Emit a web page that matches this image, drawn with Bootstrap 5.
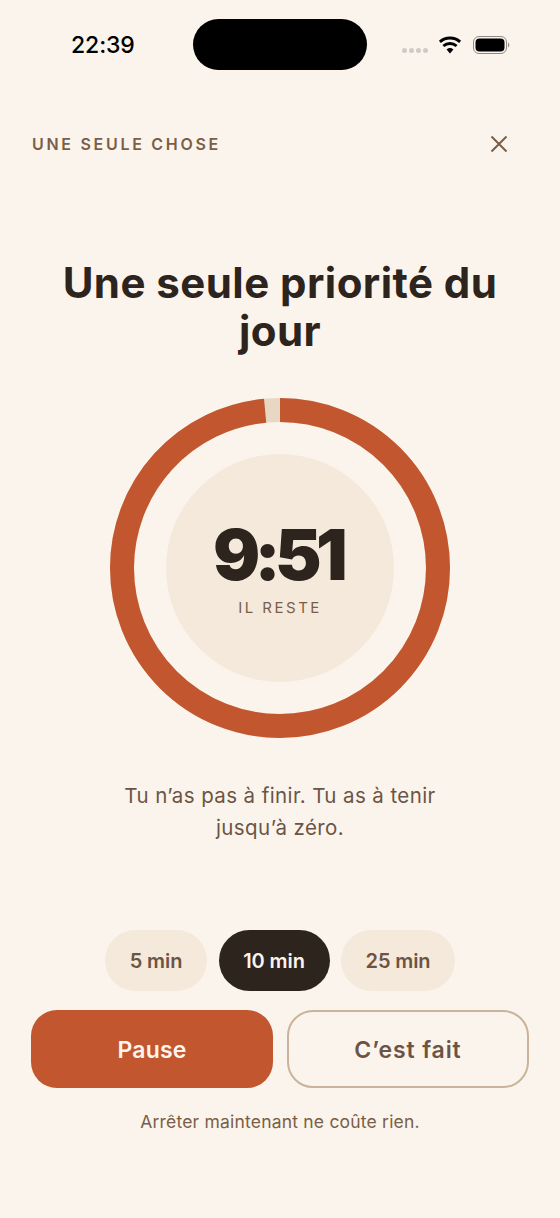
<!DOCTYPE html>
<html lang="fr">
<head>
<meta charset="utf-8">
<title>Une seule chose</title>
<link href="https://cdn.jsdelivr.net/npm/bootstrap@5.3.0/dist/css/bootstrap.min.css" rel="stylesheet">
<style>
html,body{height:100%}
body{background:#fbf4ec;color:#2e241e;font-family:Inter,"Liberation Sans",sans-serif;margin:0}
.screen{width:560px;height:1218px;overflow:hidden}
.statusbar{height:51px;margin-top:19px;padding:0 49px 0 71px}
.clock{font-size:23px;font-weight:500;color:#000;width:122px;letter-spacing:-.1px;line-height:51px;padding-top:2px}
.island{width:174px;height:51px;background:#000;border-radius:26px}
.sysicons{margin-left:35px}
.dots{gap:2px;margin-top:11px;margin-right:10px}
.dots i{width:5px;height:5px;border-radius:50%;background:#cfcac5;display:block}
.wifi{margin-right:11px}
.topbar{padding:0 52px 0 32px;margin-top:64px;height:20px}
.eyebrow{font-size:16px;font-weight:600;letter-spacing:2.7px;color:#7a5e47;line-height:20px;white-space:nowrap}
.headline{font-size:42px;font-weight:700;line-height:48px;letter-spacing:.45px;text-align:center;margin:105px 40px 0;color:#2e241e}
.dial{width:340px;height:340px;margin:43px auto 0;position:relative}
.dial svg{position:absolute;inset:0}
.core{width:228px;height:228px;border-radius:50%;background:#f5e9db;position:relative}
.count{font-size:70px;font-weight:900;letter-spacing:-5.6px;line-height:70px;color:#2e241e;margin:2px 5px 0 0}
.remain{font-size:15px;letter-spacing:2.5px;color:#7a5e47;line-height:20px;margin-top:8px}
.quote{font-size:20.5px;line-height:32px;letter-spacing:.4px;color:#6b5445;text-align:center;margin:42px 110px 0}
.pills{gap:11.5px;margin-top:86px}
.pill{height:61px;border-radius:31px;background:#f5e9db;color:#6b5445;font-size:20px;font-weight:600;border:0;padding:0;letter-spacing:-.1px}
.pill.w1{width:102px}.pill.w2{width:111px}.pill.w3{width:114px}
.pill.on{background:#2e241e;color:#fbf4ec}
.actions{gap:14px;padding:0 31px;margin-top:19px}
.act{flex:0 0 242px;height:78px;border-radius:26px;font-size:23px;font-weight:600;padding:2px 0 0}
.act-main{background:#c2562f;color:#fbf4ec;border:0;letter-spacing:.2px}
.act-main:hover{background:#c2562f;color:#fbf4ec}
.act-alt{background:transparent;color:#6b5445;border:2px solid #c9b49b;letter-spacing:.9px}
.foot{font-size:17.5px;letter-spacing:.2px;color:#7a5e47;text-align:center;line-height:24px;margin-top:22px}
</style>
</head>
<body>
<div class="screen d-flex flex-column">
  <div class="statusbar d-flex align-items-center">
    <div class="clock">22:39</div>
    <div class="island"></div>
    <div class="sysicons d-flex align-items-center">
      <div class="dots d-flex"><i></i><i></i><i></i><i></i></div>
      <svg class="wifi" width="24" height="18" viewBox="0 0 24 18" aria-hidden="true"><path d="M12 17.5 8.6 13.4a5.2 5.2 0 0 1 6.800 0Z" fill="#000"/><path d="M5.4 10a10 10 0 0 1 13.2 0M1.900 5.900a15.2 15.2 0 0 1 20.2 0" fill="none" stroke="#000" stroke-width="2.9"/></svg>
      <svg width="37" height="18" viewBox="0 0 37 18" aria-hidden="true"><rect x=".5" y=".5" width="33" height="17" rx="5.500" fill="none" stroke="#8f8a85"/><rect x="2.500" y="2.500" width="29" height="13" rx="4" fill="#000"/><path d="M35 6.500a3 3 0 0 1 0 5Z" fill="#8f8a85"/></svg>
    </div>
  </div>
  <div class="topbar d-flex justify-content-between align-items-center">
    <div class="eyebrow">UNE SEULE CHOSE</div>
    <svg width="18" height="18" viewBox="0 0 18 18" aria-label="Fermer"><path d="M1.500 1.500l15 15M16.500 1.500l-15 15" stroke="#7a5e47" stroke-width="2" fill="none"/></svg>
  </div>
  <h1 class="headline">Une seule priorité du jour</h1>
  <div class="dial d-flex align-items-center justify-content-center">
    <svg width="340" height="340" viewBox="0 0 340 340" aria-hidden="true">
      <circle cx="170" cy="170" r="158" fill="none" stroke="#e8d8c3" stroke-width="24"/>
      <circle cx="170" cy="170" r="158" fill="none" stroke="#c2562f" stroke-width="24" pathLength="100" stroke-dasharray="98.5 100" transform="rotate(-90 170 170)"/>
    </svg>
    <div class="core d-flex flex-column align-items-center justify-content-center">
      <div class="count">9:51</div>
      <div class="remain">IL RESTE</div>
    </div>
  </div>
  <p class="quote">Tu n’as pas à finir. Tu as à tenir jusqu’à zéro.</p>
  <div class="pills d-flex justify-content-center">
    <button class="btn pill w1">5 min</button>
    <button class="btn pill w2 on">10 min</button>
    <button class="btn pill w3">25 min</button>
  </div>
  <div class="actions d-flex">
    <button class="btn act act-main">Pause</button>
    <button class="btn act act-alt">C’est fait</button>
  </div>
  <div class="foot">Arrêter maintenant ne coûte rien.</div>
</div>
<script src="https://cdn.jsdelivr.net/npm/bootstrap@5.3.0/dist/js/bootstrap.bundle.min.js"></script>
</body>
</html>
